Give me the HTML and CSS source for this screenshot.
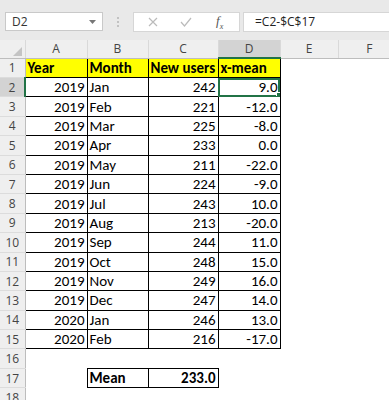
FILE: index.html
```html
<!DOCTYPE html>
<html lang="en">
<head>
  <meta charset="UTF-8">
  <title>Sheet</title>
  <link rel="stylesheet" href="styles.css">
</head>
<body>
  <div class="formula-bar">
    <div class="name-box">
      <span>D2</span>
      <svg class="caret" width="7" height="4" viewBox="0 0 7 4"><path d="M0 0h7L3.5 4z" fill="#777"/></svg>
    </div>
    <div class="grip"><i></i><i></i><i></i></div>
    <div class="fx-buttons">
      <svg width="10" height="10" viewBox="0 0 10 10"><path d="M1 1l8 8M9 1l-8 8" stroke="#bbb" stroke-width="1.2"/></svg>
      <svg width="12" height="10" viewBox="0 0 12 10"><path d="M1 5l3.5 4L11 1" stroke="#bbb" stroke-width="1.2" fill="none"/></svg>
      <span class="fx">f<sub>x</sub></span>
    </div>
    <div class="formula">=C2-$C$17</div>
  </div>

  <table class="sheet">
    <colgroup>
      <col class="c-rh"><col class="c-a"><col class="c-b"><col class="c-c"><col class="c-d"><col class="c-e"><col class="c-f">
    </colgroup>
    <tr class="col-heads">
      <th class="corner"><svg width="9" height="9" viewBox="0 0 9 9"><path d="M9 0v9H0z" fill="#c4c4c4"/></svg></th>
      <th>A</th><th>B</th><th>C</th><th class="active">D</th><th>E</th><th>F</th>
    </tr>
    <tr>
      <th class="rh">1</th>
      <td class="b head">Year</td><td class="b head">Month</td><td class="b head">New users</td><td class="b head">x-mean</td><td></td><td></td>
    </tr>
    <tr>
      <th class="rh active">2</th>
      <td class="b num">2019</td><td class="b">Jan</td><td class="b num">242</td><td class="b num sel">9.0</td><td></td><td></td>
    </tr>
    <tr><th class="rh">3</th><td class="b num">2019</td><td class="b">Feb</td><td class="b num">221</td><td class="b num">-12.0</td><td></td><td></td></tr>
    <tr><th class="rh">4</th><td class="b num">2019</td><td class="b">Mar</td><td class="b num">225</td><td class="b num">-8.0</td><td></td><td></td></tr>
    <tr><th class="rh">5</th><td class="b num">2019</td><td class="b">Apr</td><td class="b num">233</td><td class="b num">0.0</td><td></td><td></td></tr>
    <tr><th class="rh">6</th><td class="b num">2019</td><td class="b">May</td><td class="b num">211</td><td class="b num">-22.0</td><td></td><td></td></tr>
    <tr><th class="rh">7</th><td class="b num">2019</td><td class="b">Jun</td><td class="b num">224</td><td class="b num">-9.0</td><td></td><td></td></tr>
    <tr><th class="rh">8</th><td class="b num">2019</td><td class="b">Jul</td><td class="b num">243</td><td class="b num">10.0</td><td></td><td></td></tr>
    <tr><th class="rh">9</th><td class="b num">2019</td><td class="b">Aug</td><td class="b num">213</td><td class="b num">-20.0</td><td></td><td></td></tr>
    <tr><th class="rh">10</th><td class="b num">2019</td><td class="b">Sep</td><td class="b num">244</td><td class="b num">11.0</td><td></td><td></td></tr>
    <tr><th class="rh">11</th><td class="b num">2019</td><td class="b">Oct</td><td class="b num">248</td><td class="b num">15.0</td><td></td><td></td></tr>
    <tr><th class="rh">12</th><td class="b num">2019</td><td class="b">Nov</td><td class="b num">249</td><td class="b num">16.0</td><td></td><td></td></tr>
    <tr><th class="rh">13</th><td class="b num">2019</td><td class="b">Dec</td><td class="b num">247</td><td class="b num">14.0</td><td></td><td></td></tr>
    <tr><th class="rh">14</th><td class="b num">2020</td><td class="b">Jan</td><td class="b num">246</td><td class="b num">13.0</td><td></td><td></td></tr>
    <tr><th class="rh">15</th><td class="b num">2020</td><td class="b">Feb</td><td class="b num">216</td><td class="b num">-17.0</td><td></td><td></td></tr>
    <tr><th class="rh">16</th><td></td><td></td><td></td><td></td><td></td><td></td></tr>
    <tr><th class="rh">17</th><td></td><td class="b bold">Mean</td><td class="b num bold">233.0</td><td></td><td></td><td></td></tr>
    <tr><th class="rh">18</th><td></td><td></td><td></td><td></td><td></td><td></td></tr>
  </table>
</body>
</html>
```

FILE: styles.css
```css
body {
  margin: 0;
  width: 389px;
  height: 400px;
  overflow: hidden;
  background: #fff;
  font-family: "Carlito", "Liberation Sans Narrow", "Liberation Sans", sans-serif;
}

/* formula bar */
.formula-bar {
  display: flex;
  align-items: center;
  height: 40px;
  padding: 0 0 0 5px;
  background: #e9e9e9;
  box-sizing: border-box;
}

.name-box {
  display: flex;
  align-items: center;
  justify-content: space-between;
  width: 98px;
  height: 19px;
  padding: 0 6px 0 6px;
  margin-top: 3px;
  background: #fff;
  border: 1px solid #c9c9c9;
  font-family: "Open Sans", sans-serif;
  font-size: 12px;
  color: #333;
  box-sizing: border-box;
}

.grip {
  display: flex;
  flex-direction: column;
  gap: 2px;
  margin: 3px 14px 0 14px;
}

.grip i {
  width: 2px;
  height: 2px;
  background: #c2c2c2;
}

.fx-buttons {
  display: flex;
  align-items: center;
  width: 107px;
  height: 20px;
  margin-top: 3px;
  padding-left: 14px;
  gap: 22px;
  background: #fff;
  border: 1px solid #d6d6d6;
  box-sizing: border-box;
}

.fx {
  font-family: "Liberation Serif", serif;
  font-style: italic;
  font-size: 13px;
  color: #555;
  margin-left: 2px;
}

.fx sub {
  font-size: 8px;
}

.formula {
  flex: 1;
  height: 20px;
  margin: 3px 0 0 3px;
  padding-left: 11px;
  background: #fff;
  border: 1px solid #d6d6d6;
  border-right: none;
  box-sizing: border-box;
  font-family: "Open Sans", sans-serif;
  font-size: 12px;
  line-height: 18px;
  color: #222;
}

/* grid */
.sheet {
  border-collapse: collapse;
  table-layout: fixed;
  width: 400px;
  font-size: 15px;
  color: #000;
}

.c-rh { width: 25px; }
.c-a { width: 62px; }
.c-b { width: 61px; }
.c-c { width: 70px; }
.c-d { width: 62px; }
.c-e { width: 58px; }
.c-f { width: 62px; }

.sheet td, .sheet th {
  padding: 0 2px;
  white-space: nowrap;
  overflow: hidden;
}

.sheet tr {
  height: 19.4px;
}

.col-heads {
  height: 18px !important;
}

.col-heads th {
  background: #efefef;
  font-family: "Open Sans", sans-serif;
  font-weight: normal;
  font-size: 12px;
  color: #444;
  border-left: 1px solid #d9d9d9;
  border-bottom: 1px solid #bdbdbd;
  line-height: 16px;
}

.col-heads th.corner {
  border-left: none;
  text-align: right;
  vertical-align: bottom;
  padding: 0 3px 2px 0;
  line-height: 0;
}

.col-heads th.active {
  background: #d3d3d3;
  border-bottom: 2px solid #217346;
}

.rh {
  background: #efefef;
  font-family: "Open Sans", sans-serif;
  font-weight: normal;
  font-size: 12px;
  color: #444;
  text-align: center;
  border-right: 1px solid #bdbdbd;
  border-bottom: 1px solid #dcdcdc;
}

.rh.active {
  background: #d3d3d3;
  border-right: 2px solid #217346;
}

.b {
  border: 1px solid #000;
}

.head {
  background: #ffff00;
  font-weight: bold;
}

.bold {
  font-weight: bold;
}

.num {
  text-align: right;
}

.sel {
  position: relative;
  outline: 2px solid #217346;
  outline-offset: -2px;
}

.sel::after {
  content: "";
  position: absolute;
  right: -3px;
  bottom: -3px;
  width: 5px;
  height: 5px;
  background: #217346;
  border: 1px solid #fff;
}
```
